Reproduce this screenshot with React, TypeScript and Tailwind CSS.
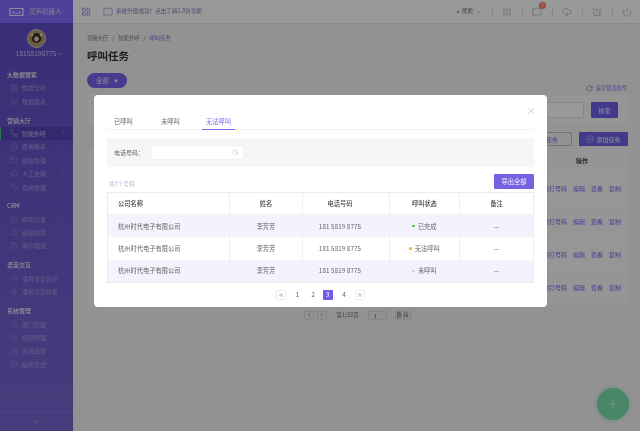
import React from "react";
import {
  AlarmClock, Bell, ChevronDown, ChevronLeft, ChevronRight, ChevronsLeft, ChevronsRight,
  ArrowLeft, ClipboardList, Clock, CloudDownload, Coins, FileText, Headphones, LayoutGrid, Mail, MessageSquare,
  Mic, Plus, PlusCircle, Power, RotateCw, Search, Settings, ShieldCheck, Sliders, Smile, Users, Waves, X, Phone, Home, type LucideIcon,
} from "lucide-react";

const font = { fontFamily: '"Noto Sans CJK SC","Liberation Sans",sans-serif' };

type Item = { label: string; icon: LucideIcon; arrow?: boolean; active?: boolean };
type Group = { title: string; cls: string; items: Item[] };

const groups: Group[] = [
  { title: "大数据管家", cls: "mt-[9.5px]", items: [
    { label: "数据分析", icon: LayoutGrid },
    { label: "数据报表", icon: Home },
  ]},
  { title: "营销大厅", cls: "mt-[5.5px]", items: [
    { label: "智能外呼", icon: Phone, arrow: true, active: true },
    { label: "查询联系", icon: Smile, arrow: true },
    { label: "短信管理", icon: Mail, arrow: true },
    { label: "人工坐席", icon: Headphones, arrow: true },
    { label: "费用管理", icon: Coins, arrow: true },
  ]},
  { title: "CRM", cls: "mt-[5.2px]", items: [
    { label: "呼叫记录", icon: Clock, arrow: true },
    { label: "留痕线索", icon: Bell, arrow: true },
    { label: "客户跟进", icon: ClipboardList, arrow: true },
  ]},
  { title: "语音交互", cls: "mt-[5.5px]", items: [
    { label: "语音交互设计", icon: Waves },
    { label: "语音交互模板", icon: Mic },
  ]},
  { title: "系统管理", cls: "mt-[5.5px]", items: [
    { label: "部门管理", icon: Users },
    { label: "权限管理", icon: ShieldCheck },
    { label: "系统设置", icon: Settings },
    { label: "操作日志", icon: FileText },
  ]},
];

function Sidebar() {
  return (
    <aside className="w-[73px] shrink-0 h-full flex flex-col bg-gradient-to-b from-[#5f4bc4] to-[#7766d0] text-white">
      <div className="h-[23px] shrink-0 flex items-center pl-[9px] gap-[5px] bg-[#846dff]">
        <svg width="15" height="10" viewBox="0 0 15 10" fill="none" stroke="#e8e4ff" strokeWidth="1.2">
          <path d="M1 1.5h13v7H1zM4.5 4v2.5M10.5 4v2.5M6 6.5h3" />
        </svg>
        <span className="text-[6.5px] leading-none text-[#d8d2f8]">灵声机器人</span>
      </div>
      <div className="flex flex-col items-center pt-[6px]">
        <div className="w-[19px] h-[19px] rounded-full bg-[#8a7458] border border-[#d8d2f0] flex items-center justify-center overflow-hidden">
          <svg width="17" height="17" viewBox="0 0 17 17">
            <rect width="17" height="17" fill="#b59a72" />
            <circle cx="8.5" cy="8" r="5" fill="#3d2f24" />
            <circle cx="8.5" cy="9" r="2.4" fill="#e0cdb0" />
            <circle cx="4" cy="5" r="1.4" fill="#e8dcc4" />
            <circle cx="13" cy="5" r="1.4" fill="#e8dcc4" />
          </svg>
        </div>
        <div className="flex items-center mt-[1px] pl-[6px] text-[6.7px] leading-[9px] text-[#cfc8f0]">
          18158198775<ChevronDown size={6} className="ml-[1px]" />
        </div>
      </div>
      <nav className="flex-1 min-h-0">
        {groups.map((g) => (
          <div key={g.title} className={g.cls}>
            <div className="pl-[7px] h-[13.5px] flex items-center text-[6px] font-medium text-white/90">{g.title}</div>
            <ul>
              {g.items.map((it) => (
                <li key={it.label} className={`h-[13.4px] flex items-center pr-[7px] text-[6px] ${it.active ? "bg-[#5845b9] border-l border-[#4ec58f] pl-[9px] text-[#c8c0f0]" : "pl-[10px] text-[#a79ce0]"}`}>
                  <it.icon size={8} strokeWidth={1.2} className="mr-[4px] shrink-0" />
                  <span className="flex-1 whitespace-nowrap">{it.label}</span>
                  {it.arrow && <ChevronRight size={6} strokeWidth={1.4} />}
                </li>
              ))}
            </ul>
          </div>
        ))}
      </nav>
      <div className="h-[20px] shrink-0 border-t border-[#8672e6] flex items-center justify-center text-[#b8aeea]">
        <ArrowLeft size={8} strokeWidth={1.3} />
      </div>
    </aside>
  );
}

function Divider() {
  return <span className="block w-px h-[8px] bg-[#e5e5e5]" />;
}

function Header() {
  const iconCls = "text-[#8a8a8a]";
  return (
    <header className="h-[23px] shrink-0 bg-white flex items-center pl-[8px] pr-[8px] shadow-[0_1px_1px_rgba(0,0,0,0.05)]">
      <LayoutGrid size={10} strokeWidth={1.4} className="text-[#6f72c8]" />
      <MessageSquare size={10} strokeWidth={1.2} className="ml-[12px] text-[#6f72c8]" />
      <span className="ml-[3px] text-[5.6px] text-[#7c84b8] whitespace-nowrap">系统升级成功！点击了解1.8新功能</span>
      <div className="ml-auto flex items-center">
        <span className="w-[2px] h-[2px] rounded-full bg-[#666]" />
        <span className="ml-[3px] text-[5.5px] text-[#666]">熊熊</span>
        <ChevronDown size={6} className="ml-[3px] text-[#777]" />
        <span className="ml-[9.5px]"><Divider /></span>
        <Sliders size={10} strokeWidth={1.2} className={`ml-[9.5px] ${iconCls}`} />
        <span className="ml-[9.5px]"><Divider /></span>
        <span className="relative ml-[9.5px]">
          <MessageSquare size={10} strokeWidth={1.2} className={iconCls} />
          <span className="absolute -top-[4.5px] left-[7px] w-[7px] h-[7px] rounded-full bg-[#ff7a60] text-white text-[4.5px] leading-[7px] text-center">5</span>
        </span>
        <span className="ml-[9.5px]"><Divider /></span>
        <CloudDownload size={10} strokeWidth={1.2} className={`ml-[9.5px] ${iconCls}`} />
        <span className="ml-[9.5px]"><Divider /></span>
        <AlarmClock size={10} strokeWidth={1.2} className={`ml-[9.5px] ${iconCls}`} />
        <span className="ml-[9.5px]"><Divider /></span>
        <Power size={10} strokeWidth={1.2} className={`ml-[9.5px] ${iconCls}`} />
      </div>
    </header>
  );
}

function BackgroundPage() {
  return (
    <main className="flex-1 min-w-0 h-full flex flex-col bg-[#f3f3f3]">
      <Header />
      <div className="flex-1 min-h-0 pl-[14px] pr-[12px] pt-[11px] relative">
        <div className="text-[5.3px] leading-[8px] text-[#777]">营销大厅<span className="mx-[4px]">/</span>智能外呼<span className="mx-[4px]">/</span><span className="text-[#7b68ee]">呼叫任务</span></div>
        <h1 className="mt-[6px] text-[10.5px] leading-[16px] font-bold text-[#333]">呼叫任务</h1>
        <div className="mt-[9px] h-[22px] flex items-start justify-between">
          <div className="w-[40px] h-[15px] rounded-full bg-[#7b62ee] flex items-center justify-center text-[6.5px] text-white/80 gap-[5px]">全部<span className="text-[4px]">▼</span></div>
          <div className="flex items-center text-[5.2px] leading-[8px] text-[#7b68ee] mt-[11px] mr-[1px]"><RotateCw size={7} className="mr-[3px]" />清空筛选条件</div>
        </div>
        <div className="h-[30px] bg-[#f8f8f8] flex items-center justify-end pr-[10px] gap-[7px]">
          <div className="w-[60px] h-[16px] bg-white border border-[#e5e5e5] rounded-[1px]" />
          <div className="w-[27px] h-[16px] rounded-[1px] bg-[#7060e8] flex items-center justify-center text-[6px] text-white/90">搜索</div>
        </div>
        <div className="mt-[7px] h-[14px] flex justify-end gap-[7px]">
          <div className="w-[40px] border border-[#bbb] rounded-[1px] flex items-center justify-center text-[6px] text-[#7b68ee]">任务</div>
          <div className="w-[49px] bg-[#7060e8] rounded-[1px] flex items-center justify-center gap-[2px] text-[6px] text-white/90"><PlusCircle size={8} strokeWidth={1.2} />添加任务</div>
        </div>
        <div className="mt-[3px] bg-[#f8f8f8] text-[6px]">
          <div className="h-[22.5px] flex items-center justify-end pr-[40px] font-bold text-[#444]">操作</div>
          {[0, 1, 2, 3].map((i) => (
            <div key={i} className={`h-[33px] flex items-center justify-end gap-[6px] pr-[7px] text-[#7b68ee] ${i % 2 ? "bg-[#f8f8f8]" : "bg-[#fbfbfb]"}`}>
              <span>拨打号码</span><span>编辑</span><span>查看</span><span>复制</span>
            </div>
          ))}
        </div>
        <div className="mt-[7px] flex items-center justify-center gap-[3px] text-[5.5px] text-[#666]">
          <span className="w-[10px] h-[9px] border border-[#ddd] rounded-[1px] flex items-center justify-center"><ChevronLeft size={6} /></span>
          <span className="w-[10px] h-[9px] border border-[#ddd] rounded-[1px] flex items-center justify-center"><ChevronRight size={6} /></span>
          <span className="ml-[6px]">第1/33页</span>
          <span className="ml-[6px] w-[19px] h-[9px] border border-[#ddd] rounded-[1px] pl-[5px] leading-[8px]">1</span>
          <span className="ml-[5px] w-[16px] h-[9px] border border-[#ddd] rounded-[1px] flex items-center justify-center">跳 转</span>
        </div>
        <button className="absolute right-[11px] bottom-[11px] w-[32px] h-[32px] rounded-full bg-[#78e0ad] shadow-[0_0_4px_rgba(120,224,173,0.6)] flex items-center justify-center text-white/80">
          <Plus size={14} strokeWidth={1.2} />
        </button>
      </div>
    </main>
  );
}

const rows = [
  { dot: "bg-[#52c41a]", status: "已完成" },
  { dot: "bg-[#faad14]", status: "无法呼叫" },
  { dot: "bg-[#d0d0d0]", status: "未呼叫" },
];

const colW = ["w-[122px]", "w-[73px]", "w-[87px]", "w-[70px]", "flex-1"];

function Modal() {
  return (
    <div className="absolute left-[94px] top-[95px] w-[453px] h-[212px] bg-white rounded-[4px] px-[13px] flex flex-col">
      <button className="absolute right-[11px] top-[11px] text-[#999]"><X size={10} strokeWidth={1} /></button>
      <div className="h-[35px] shrink-0 flex items-end border-b border-[#f2f2f2] pl-[7px] text-[6.3px] text-[#666]">
        <div className="h-[12px] w-[47px]">已呼叫</div>
        <div className="h-[12px] w-[41px]">未呼叫</div>
        <div className="h-[13px] w-[33px] text-center text-[#7b68ee] border-b border-[#7b68ee] -mb-px">无法呼叫</div>
      </div>
      <div className="mt-[8px] h-[29px] shrink-0 bg-[#f6f6f7] flex items-center pl-[7px]">
        <span className="text-[6px] text-[#666] w-[36px]">电话号码：</span>
        <div className="w-[94px] h-[15px] bg-white border border-[#f0f0f0] rounded-[1px] flex items-center justify-end pr-[4px] text-[#aaa]">
          <Search size={7} strokeWidth={1.2} />
        </div>
      </div>
      <div className="mt-[7px] h-[15px] shrink-0 flex items-end justify-between">
        <span className="text-[5.6px] leading-[9px] text-[#b9b5d0] pl-[2px]">共3个号码</span>
        <span className="w-[40px] h-[15px] rounded-[1px] bg-[#7462e0] flex items-center justify-center text-[6.25px] text-white/90">导出全部</span>
      </div>
      <div className="mt-[3px] shrink-0 border border-[#ececec] text-[6.25px] text-[#666]">
        <div className="h-[22px] flex items-center font-medium text-[#444] border-b border-[#f0f0f0]">
          <div className={`${colW[0]} h-full flex items-center pl-[10px] border-r border-[#f0f0f0]`}>公司名称</div>
          <div className={`${colW[1]} h-full flex items-center justify-center border-r border-[#f0f0f0]`}>姓名</div>
          <div className={`${colW[2]} h-full flex items-center justify-center pr-[12px] border-r border-[#f0f0f0]`}>电话号码</div>
          <div className={`${colW[3]} h-full flex items-center justify-center border-r border-[#f0f0f0]`}>呼叫状态</div>
          <div className={`${colW[4]} h-full flex items-center justify-center`}>备注</div>
        </div>
        {rows.map((r, i) => (
          <div key={r.status} className={`h-[22.4px] flex items-center ${i % 2 === 0 ? "bg-[#f4f2fc]" : "bg-white"}`}>
            <div className={`${colW[0]} h-full flex items-center pl-[10px] border-r border-[#f0f0f0] whitespace-nowrap`}>杭州时代电子有限公司</div>
            <div className={`${colW[1]} h-full flex items-center justify-center border-r border-[#f0f0f0]`}>李芳芳</div>
            <div className={`${colW[2]} h-full flex items-center justify-center pr-[12px] border-r border-[#f0f0f0] tracking-[0.1px]`}>181 5819 8775</div>
            <div className={`${colW[3]} h-full flex items-center justify-center border-r border-[#f0f0f0] gap-[3px]`}>
              <span className={`w-[2.5px] h-[2.5px] rounded-full ${r.dot}`} />{r.status}
            </div>
            <div className={`${colW[4]} h-full flex items-center justify-center`}>—</div>
          </div>
        ))}
      </div>
      <div className="mt-[6.5px] flex items-center justify-center text-[6.5px] text-[#666] pr-[1px]">
        <span className="w-[10px] h-[10px] border border-[#eee] rounded-[1px] flex items-center justify-center"><ChevronsLeft size={6} /></span>
        <span className="w-[16px] ml-[4px] text-center">1</span>
        <span className="w-[15px] text-center">2</span>
        <span className="w-[10px] h-[10px] mx-[2px] rounded-[1px] bg-[#6c5ce7] text-white flex items-center justify-center">3</span>
        <span className="w-[15px] ml-[2px] text-center">4</span>
        <span className="w-[10px] h-[10px] ml-[3px] border border-[#eee] rounded-[1px] flex items-center justify-center"><ChevronsRight size={6} /></span>
      </div>
    </div>
  );
}

export default function App() {
  return (
    <div className="relative w-[640px] h-[431px] overflow-hidden flex blur-[0.3px]" style={font}>
      <Sidebar />
      <BackgroundPage />
      <div className="absolute inset-0 bg-black/40" />
      <Modal />
    </div>
  );
}
